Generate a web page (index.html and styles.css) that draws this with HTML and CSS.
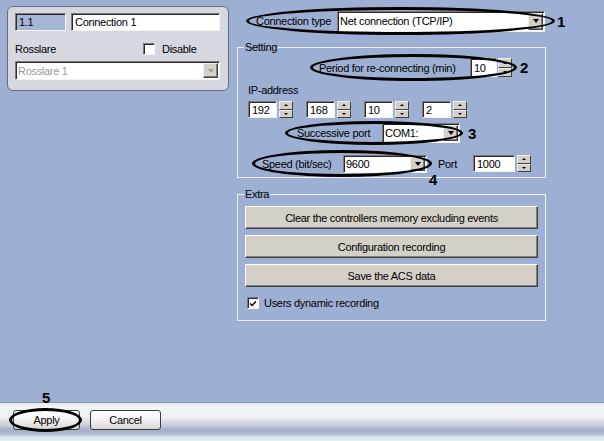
FILE: index.html
```html
<!DOCTYPE html>
<html lang="en">
<head>
    <meta charset="UTF-8">
    <title>Connection settings</title>
    <link rel="stylesheet" href="styles.css">
</head>
<body>
<div class="page">
    <div class="content">

        <!-- Connection object card -->
        <div class="card">
            <div class="card-row">
                <div class="field field-id">1.1</div>
                <div class="field field-name">Connection 1</div>
            </div>
            <div class="card-row card-check">
                <span class="card-label">Rosslare</span>
                <span class="checkbox"></span>
                <span>Disable</span>
            </div>
            <div class="select select-off card-select">
                <span class="select-value">Rosslare 1</span>
                <span class="select-arrow"></span>
            </div>
        </div>

        <div class="side">
            <div class="annot-row conn-row">
                <div class="ellipse conn-ellipse">
                    <span class="conn-label">Connection type</span>
                    <div class="select conn-select">
                        <span class="select-value">Net connection (TCP/IP)</span>
                        <span class="select-arrow"></span>
                    </div>
                </div>
                <span class="callout">1</span>
            </div>

            <fieldset class="group setting">
                <legend>Setting</legend>

                <div class="annot-row period-row">
                    <div class="ellipse period-ellipse">
                        <span class="period-label">Period for re-connecting (min)</span>
                        <div class="field period-field">10</div>
                        <span class="spin"><span class="spin-up"></span><span class="spin-down"></span></span>
                    </div>
                    <span class="callout">2</span>
                </div>

                <div class="ip-label">IP-address</div>
                <div class="ip-row">
                    <div class="ip-part"><div class="field ip-field">192</div><span class="spin"><span class="spin-up"></span><span class="spin-down"></span></span></div>
                    <div class="ip-part"><div class="field ip-field">168</div><span class="spin"><span class="spin-up"></span><span class="spin-down"></span></span></div>
                    <div class="ip-part"><div class="field ip-field">10</div><span class="spin"><span class="spin-up"></span><span class="spin-down"></span></span></div>
                    <div class="ip-part"><div class="field ip-field">2</div><span class="spin"><span class="spin-up"></span><span class="spin-down"></span></span></div>
                </div>

                <div class="annot-row port-row">
                    <div class="ellipse port-ellipse">
                        <span class="port-label">Successive port</span>
                        <div class="select port-select">
                            <span class="select-value">COM1:</span>
                            <span class="select-arrow"></span>
                        </div>
                    </div>
                    <span class="callout">3</span>
                </div>

                <div class="annot-row speed-row">
                    <div class="ellipse speed-ellipse">
                        <span class="speed-label">Speed (bit/sec)</span>
                        <div class="select speed-select">
                            <span class="select-value">9600</span>
                            <span class="select-arrow"></span>
                        </div>
                        <span class="callout callout-below">4</span>
                    </div>
                    <span class="tcp-label">Port</span>
                    <div class="field tcp-field">1000</div>
                    <span class="spin"><span class="spin-up"></span><span class="spin-down"></span></span>
                </div>
            </fieldset>

            <fieldset class="group extra">
                <legend>Extra</legend>
                <div class="btn">Clear the controllers memory excluding events</div>
                <div class="btn">Configuration recording</div>
                <div class="btn">Save the ACS data</div>
                <div class="check-row">
                    <span class="checkbox checked">
                        <svg width="8" height="8" viewBox="0 0 8 8"><path d="M1 3.5 L3 5.5 L7 1.5 L7 3.5 L3 7.5 L1 5.5 Z" fill="#000"/></svg>
                    </span>
                    <span>Users dynamic recording</span>
                </div>
            </fieldset>
        </div>
    </div>

    <!-- Bottom toolbar -->
    <div class="bar">
        <span class="callout callout-apply">5</span>
        <div class="bar-btn apply">Apply</div>
        <div class="bar-btn">Cancel</div>
    </div>
</div>
</body>
</html>
```

FILE: styles.css
```css
body {
    margin: 0;
    width: 604px;
    height: 441px;
    overflow: hidden;
    background: #9dafd3;
    font-family: 'Liberation Sans', Arial, sans-serif;
    font-size: 11px;
    letter-spacing: -0.3px;
    white-space: nowrap;
    color: #000;
}

.page {
    display: flex;
    flex-direction: column;
    height: 441px;
}

.content {
    flex: 1;
    display: flex;
    align-items: flex-start;
}

/* Card with the object name */
.card {
    margin: 6px 0 0 7px;
    width: 222px;
    height: 85px;
    box-sizing: border-box;
    border: 1px solid #676d7c;
    border-radius: 6px;
    background: #d5d8df;
    padding: 6px 7px 0 7px;
}

.card-row {
    display: flex;
    align-items: center;
    gap: 5px;
}

.card-check {
    margin-top: 12px;
    height: 12px;
    gap: 0;
}

.card-label {
    width: 128px;
}

.card-check .checkbox {
    margin-right: 7px;
}

.card-select {
    margin-top: 6px;
    width: 205px;
    height: 19px;
}

/* Sunken edit fields */
.field {
    box-sizing: border-box;
    border: 1px solid;
    border-color: #7a7a7a #f4f4f4 #f4f4f4 #7a7a7a;
    box-shadow: inset 1px 1px 0 #2b2b2b;
    background: #fff;
    padding: 0 0 0 3px;
    display: flex;
    align-items: center;
}

.field-id {
    width: 51px;
    height: 18px;
    background: #a5b5d5;
}

.field-name {
    width: 149px;
    height: 18px;
}

/* Dropdowns */
.select {
    display: flex;
    box-sizing: border-box;
    border: 1px solid;
    border-color: #7a7a7a #f4f4f4 #f4f4f4 #7a7a7a;
    box-shadow: inset 1px 1px 0 #2b2b2b;
    background: #fff;
    padding: 1px 1px 1px 2px;
}

.select-value {
    flex: 1;
    display: flex;
    align-items: center;
    overflow: hidden;
}

.select-arrow {
    width: 15px;
    box-sizing: border-box;
    background: #d4d0c8;
    border: 1px solid;
    border-color: #f0f0f0 #404040 #404040 #f0f0f0;
    box-shadow: inset -1px -1px 0 #808080;
    display: flex;
    align-items: center;
    justify-content: center;
}

.select-arrow::after {
    content: "";
    border-left: 3.5px solid transparent;
    border-right: 3.5px solid transparent;
    border-top: 4px solid #000;
}

.select-off .select-value {
    color: #9b9b9b;
}

.select-off .select-arrow::after {
    border-top-color: #a0a0a0;
}

/* Checkboxes */
.checkbox {
    width: 12px;
    height: 12px;
    box-sizing: border-box;
    background: #fff;
    border: 1px solid;
    border-color: #7a7a7a #f4f4f4 #f4f4f4 #7a7a7a;
    box-shadow: inset 1px 1px 0 #2b2b2b;
    display: flex;
    align-items: center;
    justify-content: center;
}

/* Spin buttons */
.spin {
    width: 14px;
    height: 17px;
    display: flex;
    flex-direction: column;
    flex-shrink: 0;
}

.spin-up,
.spin-down {
    flex: 1;
    background: #d4d0c8;
    border: 1px solid;
    border-color: #f0f0f0 #404040 #404040 #f0f0f0;
    display: flex;
    align-items: center;
    justify-content: center;
}

.spin-up::after {
    content: "";
    border-left: 2px solid transparent;
    border-right: 2px solid transparent;
    border-bottom: 2px solid #000;
}

.spin-down::after {
    content: "";
    border-left: 2px solid transparent;
    border-right: 2px solid transparent;
    border-top: 2px solid #000;
}

/* Right column */
.side {
    margin-left: 8px;
    width: 309px;
    padding-top: 7px;
}

.annot-row {
    display: flex;
    align-items: center;
}

/* Hand-drawn annotation ellipses over the controls */
.ellipse {
    position: relative;
    display: flex;
    align-items: center;
    box-sizing: border-box;
    flex-shrink: 0;
}

.ellipse::after {
    content: "";
    position: absolute;
    inset: 0;
    border: 3px solid #000;
    border-radius: 50%;
    pointer-events: none;
}

.callout {
    font-size: 15px;
    font-weight: bold;
    line-height: 15px;
    letter-spacing: 0;
}

.conn-row {
    margin-left: 9px;
}

.conn-ellipse {
    width: 309px;
    height: 28px;
    padding-left: 10px;
}

.conn-label {
    width: 75px;
    flex-shrink: 0;
}

.conn-select {
    margin-left: 6px;
    width: 208px;
    height: 21px;
}

.conn-row .callout {
    margin-left: 2px;
}

/* Group boxes */
.group {
    margin: 6px 0 0 0;
    width: 309px;
    box-sizing: border-box;
    border: 1px solid #eef1f7;
    padding: 0 0 0 6px;
}

.group legend {
    padding: 0 1px;
    line-height: 13px;
}

.period-row {
    margin-left: 66px;
}

.period-ellipse {
    width: 207px;
    height: 27px;
    padding-left: 9px;
}

.period-label {
    width: 146px;
}

.period-field {
    margin-left: 5px;
    width: 27px;
    height: 19px;
}

.period-ellipse .spin {
    margin-left: 1px;
    height: 19px;
}

.period-row .callout {
    margin-left: 3px;
}

.ip-label {
    margin: 3px 0 0 4px;
    line-height: 13px;
}

.ip-row {
    margin: 4px 0 0 4px;
    display: flex;
    gap: 13px;
}

.ip-part {
    display: flex;
    gap: 2px;
}

.ip-field {
    width: 29px;
    height: 17px;
}

.port-row {
    margin: 3px 0 0 41px;
}

.port-ellipse {
    width: 178px;
    height: 24px;
    padding-left: 12px;
}

.port-label {
    width: 80px;
}

.port-select {
    margin-left: 5px;
    width: 78px;
    height: 20px;
}

.port-row .callout {
    margin-left: 5px;
}

.speed-row {
    margin: 5px 0 0 8px;
}

.speed-ellipse {
    width: 180px;
    height: 27px;
    padding-left: 10px;
}

.speed-label {
    width: 76px;
}

.speed-select {
    margin-left: 5px;
    width: 84px;
    height: 18px;
}

.callout-below {
    position: absolute;
    left: 177px;
    top: 22px;
}

.tcp-label {
    margin-left: 6px;
    width: 35px;
}

.tcp-field {
    width: 42px;
    height: 17px;
}

.speed-row .spin {
    margin-left: 2px;
}

.extra {
    margin-top: 10px;
    padding-bottom: 11px;
}

.btn {
    margin: 5px 0 0 1px;
    width: 293px;
    height: 23px;
    box-sizing: border-box;
    background: #d4d0c8;
    border: 1px solid;
    border-color: #fff #404040 #404040 #fff;
    box-shadow: inset -1px -1px 0 #808080;
    display: flex;
    align-items: center;
    justify-content: center;
}

.btn + .btn {
    margin-top: 6px;
}

.check-row {
    margin: 10px 0 0 3px;
    display: flex;
    align-items: center;
    gap: 5px;
}

/* Bottom toolbar */
.bar {
    position: relative;
    height: 39px;
    box-sizing: border-box;
    border-top: 1px solid #8995ad;
    background: linear-gradient(to bottom, #e6e8ec 0, #f2f3f5 3px, #eef0f2 14px, #c9ced9 22px, #a6aec6 27px, #b0bbcf 31px, #d3e4ec 34px, #e2f0f4 38px);
    display: flex;
    align-items: flex-start;
    gap: 10px;
    padding: 7px 0 0 13px;
}

.bar-btn {
    position: relative;
    width: 71px;
    height: 20px;
    box-sizing: border-box;
    border: 1px solid #3c3c3c;
    border-radius: 3px;
    background: linear-gradient(to bottom, #ffffff 0, #f4f4f4 45%, #d6d6d6 100%);
    display: flex;
    align-items: center;
    justify-content: center;
}

.apply {
    width: 67px;
}

.apply::after {
    content: "";
    position: absolute;
    inset: -3px -3px -3px -5px;
    border: 3px solid #000;
    border-radius: 50%;
}

.callout-apply {
    position: absolute;
    left: 42px;
    top: -13px;
}
```
